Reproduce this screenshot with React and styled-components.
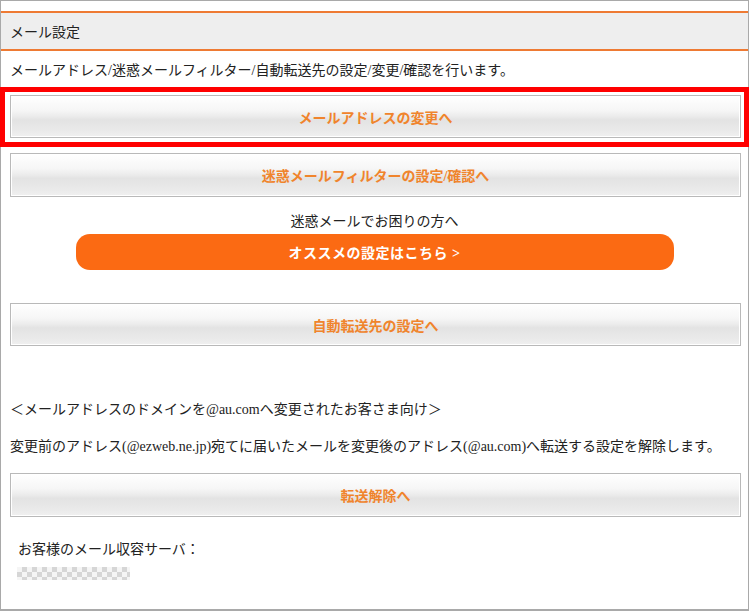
import React from "react";
import styled, { createGlobalStyle } from "styled-components";

const Global = createGlobalStyle`
  html, body { margin: 0; padding: 0; background: #fff; }
  body {
    font-family: "Liberation Serif", "Noto Sans CJK JP", serif;
    color: #222;
    font-size: 14px;
  }
`;

const Frame = styled.div`
  box-sizing: border-box;
  width: 749px;
  height: 611px;
  border: 1px solid #a9a9a9;
  border-bottom-width: 2px;
  padding-top: 10px;
  display: flex;
  flex-direction: column;
`;

const Header = styled.div`
  height: 36px;
  border-top: 2px solid #ee7a33;
  border-bottom: 2px solid #ee7a33;
  background: #eeeeee;
  display: flex;
  align-items: center;
  padding-left: 9px;
  font-size: 14px;
`;

const Desc = styled.div`
  height: 36px;
  display: flex;
  align-items: center;
  padding-left: 9px;
  font-size: 14px;
`;

const Highlight = styled.div`
  margin: 0 -1px;
  border: 5px solid #ff0000;
  padding: 3px 3px 4px 5px;
  display: flex;
  flex-direction: column;
`;

const GrayButton = styled.div`
  box-sizing: border-box;
  height: ${(p) => p.$h || 43}px;
  margin: ${(p) => p.$mt || 0}px ${(p) => (p.$inBox ? 0 : 7)}px 0 ${(p) => (p.$inBox ? 0 : 9)}px;
  border: 1px solid #b9b9b9;
  box-shadow: inset 0 0 0 1px #ffffff;
  background: linear-gradient(
    #ffffff 0%,
    #f6f6f6 35%,
    #ebebeb 50%,
    #e3e3e3 58%,
    #eaeaea 85%,
    #f0f0f0 100%
  );
  display: flex;
  align-items: center;
  justify-content: center;
  color: #f0842c;
  font-weight: bold;
  font-size: 14px;
`;

const Notice = styled.div`
  margin-top: 15px;
  line-height: 20px;
  text-align: center;
  font-size: 14px;
`;

const OrangePill = styled.div`
  margin: 2px auto 0;
  width: 598px;
  height: 36px;
  border-radius: 14px;
  background: #fb6a13;
  color: #fff;
  font-weight: bold;
  font-size: 14px;
  display: flex;
  align-items: center;
  justify-content: center;
  letter-spacing: 0.5px;
`;

const Line = styled.div`
  margin-top: ${(p) => p.$mt}px;
  line-height: 20px;
  padding-left: ${(p) => p.$pl || 9}px;
  font-size: 14px;
  white-space: nowrap;
`;

const Masked = styled.div`
  margin: 7px 0 0 16px;
  width: 113px;
  height: 13px;
  background-color: #f4f4f4;
  background-image: repeating-conic-gradient(#d2d2d2 0 25%, #f4f4f4 0 50%);
  background-size: 10px 10px;
  opacity: 0.9;
`;

export default function App() {
  return (
    <>
      <Global />
      <Frame>
        <Header>メール設定</Header>
        <Desc>メールアドレス/迷惑メールフィルター/自動転送先の設定/変更/確認を行います。</Desc>
        <Highlight>
          <GrayButton $inBox $h={43}>メールアドレスの変更へ</GrayButton>
        </Highlight>
        <GrayButton $mt={6} $h={44}>迷惑メールフィルターの設定/確認へ</GrayButton>
        <Notice>迷惑メールでお困りの方へ</Notice>
        <OrangePill>オススメの設定はこちら &gt;</OrangePill>
        <GrayButton $mt={33} $h={43}>自動転送先の設定へ</GrayButton>
        <Line $mt={54}>＜メールアドレスのドメインを@au.comへ変更されたお客さま向け＞</Line>
        <Line $mt={17}>変更前のアドレス(@ezweb.ne.jp)宛てに届いたメールを変更後のアドレス(@au.com)へ転送する設定を解除します。</Line>
        <GrayButton $mt={16} $h={44}>転送解除へ</GrayButton>
        <Line $mt={23} $pl={17}>お客様のメール収容サーバ：</Line>
        <Masked />
      </Frame>
    </>
  );
}
